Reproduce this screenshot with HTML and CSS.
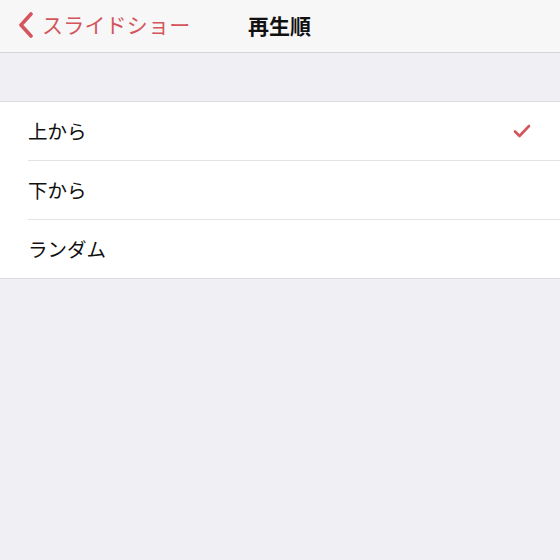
FILE: index.html
```html
<!DOCTYPE html>
<html lang="ja">
<head>
<meta charset="utf-8">
<link rel="stylesheet" href="styles.css">
</head>
<body>
<div class="nav">
  <div class="back">
    <svg class="chev" width="16" height="26" viewBox="0 0 16 26"><path d="M13 2 L3 13 L13 24" fill="none" stroke="#d4555c" stroke-width="3.6" stroke-linecap="round" stroke-linejoin="round"/></svg>
    <span class="back-text">スライドショー</span>
  </div>
  <div class="title">再生順</div>
</div>
<div class="gap"></div>
<div class="list">
  <div class="row"><span class="label">上から</span>
    <svg class="check" width="18" height="14" viewBox="0 0 18 14"><path d="M2 7.5 L6.5 12 L16 2" fill="none" stroke="#d4555c" stroke-width="2.6" stroke-linecap="round" stroke-linejoin="round"/></svg>
  </div>
  <div class="row"><span class="label">下から</span></div>
  <div class="row"><span class="label">ランダム</span></div>
</div>
</body>
</html>
```
FILE: styles.css
```css
html, body { margin: 0; padding: 0; }
body {
  width: 560px; height: 560px; background: #efeff4;
  font-family: "Noto Sans CJK JP", "Noto Sans", sans-serif;
  overflow: hidden;
}
.nav {
  height: 53px; background: #f7f7f7; border-bottom: 1px solid #d6d6da;
  position: relative; display: flex; align-items: center; padding-bottom: 3px; box-sizing: border-box;
}
.back { display: flex; align-items: center; padding-left: 18px; }
.chev { display: block; }
.back-text { color: #d4555c; font-size: 21px; margin-left: 8px; letter-spacing: 0.2px; line-height: 1; }
.title {
  position: absolute; left: 248px; top: 0; height: 50px; display: flex; align-items: center;
  font-size: 21px; font-weight: 700; color: #111;
}
.gap { height: 48px; }
.list { background: #fff; border-top: 1px solid #dcdce0; border-bottom: 1px solid #dcdce0; }
.row {
  height: 59px; margin-left: 28px; padding-right: 29px; display: flex; align-items: center; justify-content: space-between;
  border-bottom: 1px solid #e2e2e6; box-sizing: border-box;
}
.row:last-child { border-bottom: none; height: 58px; }
.label { font-size: 19.5px; color: #111; line-height: 1; }
.check { display: block; }
```
